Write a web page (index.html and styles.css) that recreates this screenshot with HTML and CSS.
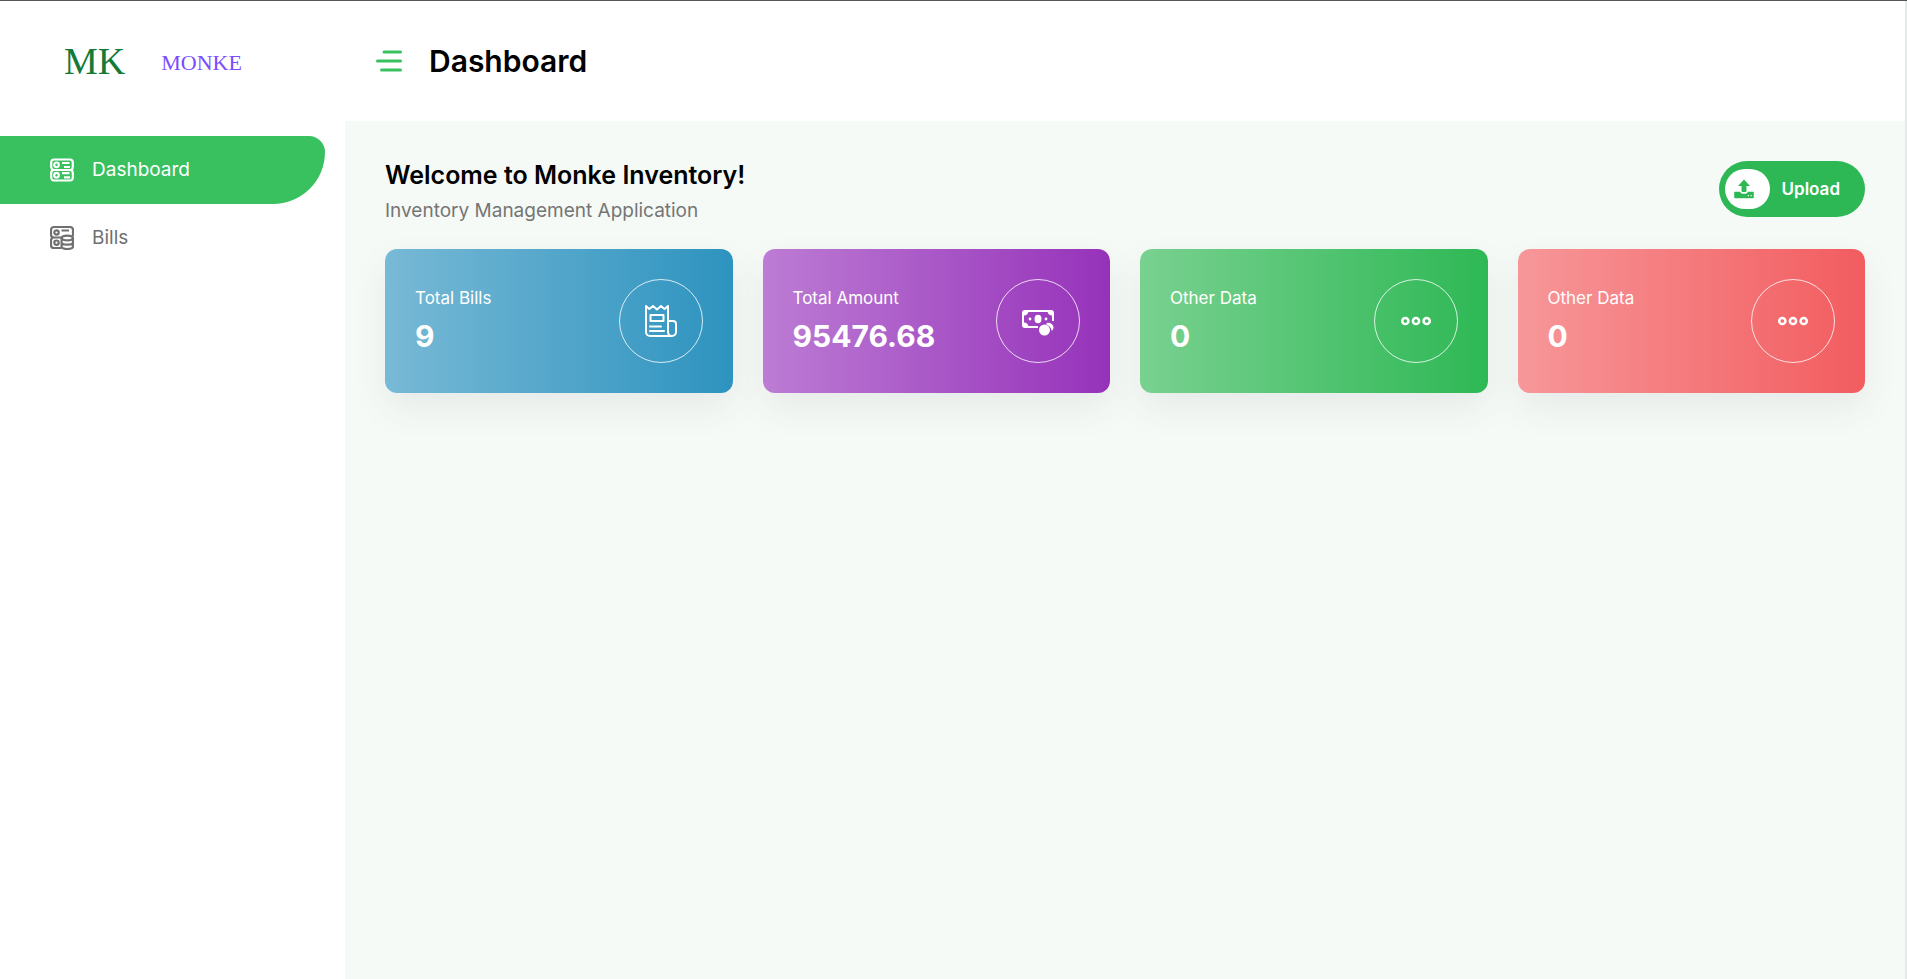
FILE: index.html
```html
<!DOCTYPE html>
<html lang="en">
<head>
<meta charset="utf-8">
<title>Dashboard</title>
<link rel="stylesheet" href="styles.css">
</head>
<body>
<div class="app">
  <aside class="sidebar">
    <a class="brand" href="#"><span class="brand-mark">MK</span><span class="brand-name">MONKE</span></a>
    <nav class="nav">
      <a class="nav-item active" href="#">
        <svg class="nav-icon" viewBox="0 0 24 24" fill="none" stroke="currentColor" stroke-width="2.200"><rect x="1.200" y="1.500" width="21.600" height="10.500" rx="3"/><rect x="1.200" y="12" width="21.600" height="10.500" rx="3"/><circle cx="6.500" cy="6.800" r="2.300"/><circle cx="6.500" cy="17.200" r="2.300"/><path d="M12 5h7.500M14 9h6M12 15.200h7.500M14 19.400h6"/></svg>
        Dashboard
      </a>
      <a class="nav-item" href="#">
        <svg class="nav-icon" viewBox="0 0 24 24" fill="none" stroke="currentColor" stroke-width="2.200"><path d="M11.500 22H4a3 3 0 0 1-3-3v-4.500a3 3 0 0 1 3-3h7.500M4 11.500a3 3 0 0 1-3-3V4a3 3 0 0 1 3-3h16a3 3 0 0 1 3 3v6M11.500 4.500h7.500"/><circle cx="6.500" cy="6.500" r="2.200"/><circle cx="6.500" cy="16.700" r="2.200"/><ellipse cx="17.300" cy="12" rx="5.700" ry="2.400"/><path d="M11.600 12v8.500c0 1.500 2.500 2.500 5.700 2.500s5.700-1 5.700-2.500V12M11.600 16.200c0 1.500 2.500 2.500 5.700 2.500s5.700-1 5.700-2.500"/></svg>
        Bills
      </a>
    </nav>
  </aside>
  <div class="page">
    <header class="topbar">
      <button class="menu" type="button" aria-label="Toggle menu">
        <svg viewBox="0 0 26 22" stroke="currentColor" stroke-width="3" stroke-linecap="round"><path d="M8 2h16.500M1.500 11h23M5.500 20h19"/></svg>
      </button>
      <h1 class="title">Dashboard</h1>
    </header>
    <main class="main">
      <section class="welcome">
        <div>
          <h2 class="welcome-title">Welcome to Monke Inventory!</h2>
          <p class="welcome-sub">Inventory Management Application</p>
        </div>
        <button class="upload" type="button">
          <span class="upload-icon"><svg viewBox="0 0 20 20" fill="currentColor"><path d="M10 .5 16 7h-3.500v5a1 1 0 0 1-1 1h-3a1 1 0 0 1-1-1V7H4z"/><path fill-rule="evenodd" d="M1 12.800h5.200c.4 1.300 1.200 2 2.300 2h3c1.100 0 1.900-.7 2.300-2H19a.8.800 0 0 1 .8.800v4.800a.8.800 0 0 1-.8.800H1a.8.800 0 0 1-.8-.8v-4.800a.8.800 0 0 1 .8-.8zM13.800 16v1.200H15V16zm2.700 0v1.200h1.200V16z"/></svg></span>
          Upload
        </button>
      </section>
      <section class="cards">
        <article class="card blue">
          <div><p class="label">Total Bills</p><p class="value">9</p></div>
          <span class="ring"><svg viewBox="0 0 32 32" fill="none" stroke="currentColor" stroke-width="2" stroke-linejoin="round"><path d="M1 1l3.300 3L8 1l4 3.500L16 1l3.500 3L23 1v26a4 4 0 0 0 4 4H5a4 4 0 0 1-4-4zM23 16h5a3 3 0 0 1 3 3v8a4 4 0 0 1-4 4"/><path d="M5.500 10h13v6h-13z"/><path d="M5 21.500h11M5 26h14" stroke-linecap="round"/></svg></span>
        </article>
        <article class="card purple">
          <div><p class="label">Total Amount</p><p class="value">95476.68</p></div>
          <span class="ring"><svg viewBox="0 0 32 32"><path d="M16 22H3a2 2 0 0 1-2-2V8a2 2 0 0 1 2-2h26a2 2 0 0 1 2 2v8" fill="none" stroke="currentColor" stroke-width="2"/><g fill="currentColor"><path d="M1 6h5.500a4.500 4.500 0 0 1-4.500 4.500H1zM31 6h-5.500a4.500 4.500 0 0 0 4.500 4.500h1zM1 22h5.500A4.500 4.500 0 0 0 2 17.500H1z"/><ellipse cx="16" cy="14" rx="3.500" ry="4.200"/><circle cx="8" cy="14" r="1.400"/><circle cx="24" cy="14" r="1.400"/><circle cx="22.500" cy="25" r="5.500"/><path d="M25 17.800c2.800-.6 6.500 1.500 6.500 4.700 0 1.300-.6 2.500-1.800 3.400-.3-3-2.200-5.600-5.500-6.500z"/></g></svg></span>
        </article>
        <article class="card green">
          <div><p class="label">Other Data</p><p class="value">0</p></div>
          <span class="ring"><svg viewBox="0 0 32 32" fill="none" stroke="currentColor" stroke-width="2.500"><circle cx="5.300" cy="16" r="3.100"/><circle cx="16" cy="16" r="3.100"/><circle cx="26.700" cy="16" r="3.100"/></svg></span>
        </article>
        <article class="card red">
          <div><p class="label">Other Data</p><p class="value">0</p></div>
          <span class="ring"><svg viewBox="0 0 32 32" fill="none" stroke="currentColor" stroke-width="2.500"><circle cx="5.300" cy="16" r="3.100"/><circle cx="16" cy="16" r="3.100"/><circle cx="26.700" cy="16" r="3.100"/></svg></span>
        </article>
      </section>
    </main>
  </div>
</div>
</body>
</html>
```
FILE: styles.css
```css
* { box-sizing: border-box; }
body { margin: 0; font-family: Inter, "Open Sans", sans-serif; background: #fff; color: #000; }
h1, h2, p { margin: 0; }
a { color: inherit; text-decoration: none; }
button { font: inherit; border: 0; cursor: pointer; }
svg { display: block; }

.app { display: flex; min-height: 100vh; border-top: 1px solid #565656; }

.sidebar { flex: 0 0 345px; }
.brand { display: flex; align-items: center; gap: 36px; height: 120px; padding-left: 64px; font-family: "Liberation Serif", serif; line-height: 1; }
.brand-mark { font-size: 38px; color: #157a38; }
.brand-name { padding-top: 4px; font-size: 22px; color: #7c4dff; }
.nav { padding: 15px 20px 0 0; }
.nav-item { display: flex; align-items: center; gap: 18px; height: 68px; padding-left: 50px; font-size: 19px; line-height: 24px; color: #707070; }
.nav-item.active { background: #39c160; color: #fff; border-radius: 0 16px 52px 0; }
.nav-icon { width: 24px; height: 24px; }

.page { flex: 1; display: flex; flex-direction: column; border-right: 2px solid #e6eae8; }
.topbar { display: flex; align-items: center; gap: 27px; height: 120px; padding: 0 31px; }
.menu { width: 26px; padding: 0; background: none; color: #39c160; }
.title { font-size: 30px; line-height: 42px; font-weight: 600; }

.main { flex: 1; padding: 40px; background: #f5faf6; }
.welcome { display: flex; justify-content: space-between; align-items: flex-start; padding-bottom: 24px; }
.welcome-title { font-size: 25px; line-height: 28px; font-weight: 600; }
.welcome-sub { padding-top: 8px; font-size: 19px; line-height: 28px; color: #757575; }
.upload { display: flex; align-items: center; gap: 12px; height: 56px; padding: 0 25px 0 6px; border-radius: 28px; background: #2eb855; color: #fff; font-size: 17px; font-weight: 600; }
.upload-icon { display: grid; place-items: center; width: 45px; height: 40px; padding-right: 7px; border-radius: 20px; background: #fff; color: #2eb855; }
.upload-icon svg { width: 20px; height: 20px; }

.cards { display: grid; grid-template-columns: repeat(4, 1fr); gap: 30px; }
.card { display: flex; align-items: center; justify-content: space-between; padding: 30px; border-radius: 12px; color: #fff; box-shadow: 0 15px 35px rgba(60, 70, 90, 0.08); }
.blue { background: linear-gradient(90deg, #78b9d6, #2d93bf); }
.purple { background: linear-gradient(90deg, #bc7cd4, #9632ba); }
.green { background: linear-gradient(90deg, #79d190, #2eb855); }
.red { background: linear-gradient(90deg, #f79799, #f25c5f); }
.label { font-size: 17px; line-height: 24px; }
.value { padding-top: 6px; font-size: 30px; line-height: 40px; font-weight: 700; }
.ring { display: grid; place-items: center; width: 84px; height: 84px; border: 1px solid rgba(255, 255, 255, 0.8); border-radius: 50%; }
.ring svg { width: 32px; height: 32px; }
```
